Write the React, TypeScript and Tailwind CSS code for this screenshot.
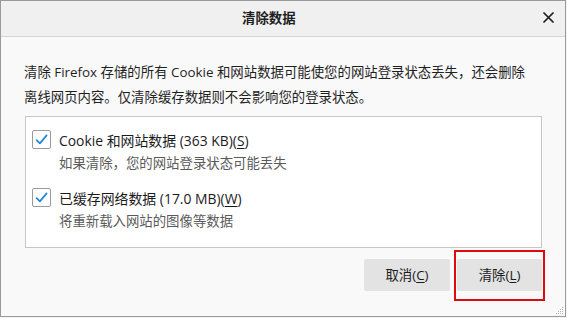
import React from "react";

const FONT = '"Open Sans", "Noto Sans CJK SC", sans-serif';

function Check() {
  return (
    <div className="w-[19px] h-[19px] shrink-0 border border-[#9a9a9a] rounded-[2px] bg-white flex items-center justify-center">
      <svg width="15" height="15" viewBox="0 0 15 15">
        <path d="M2.6 8.1 L5.9 11.4 L12.6 3.4" fill="none" stroke="#1f87d6" strokeWidth="1.7" strokeLinecap="round" strokeLinejoin="round" />
      </svg>
    </div>
  );
}

function Item({ label, accel, sub, className }: { label: string; accel: string; sub: string; className?: string }) {
  return (
    <div className={"flex items-start gap-[8px] " + (className ?? "")}>
      <Check />
      <div className="mt-[1px] flex flex-col">
        <div className="leading-[20px] text-[13.9px] text-[#1b1b1b] whitespace-nowrap">
          {label}(<span className="underline underline-offset-2">{accel}</span>)
        </div>
        <div className="mt-[2px] leading-[20px] text-[#5a5a5a] whitespace-nowrap">{sub}</div>
      </div>
    </div>
  );
}

export default function App() {
  return (
    <div className="w-[567px] h-[318px] bg-[#f4f4f4] overflow-hidden" style={{ fontFamily: FONT }}>
      <div className="relative w-[566px] h-[317px] border border-[#9a9a9a] bg-[#f9f9f9] flex flex-col text-[13.4px]">
        <div className="h-[36px] shrink-0 bg-[#f0f0f0] border-b border-[#d4d4d4] flex items-center">
          <div className="pl-[241px] font-bold text-[#1e1e1e] leading-[20px] -mt-[2px]">清除数据</div>
          <div className="ml-auto mr-[11px] -mt-[2px] w-[12px] h-[12px] flex items-center justify-center">
            <svg width="11" height="11" viewBox="0 0 11 11">
              <path d="M1 1 L10 10 M10 1 L1 10" stroke="#1c1c1c" strokeWidth="1.7" strokeLinecap="round" />
            </svg>
          </div>
        </div>
        <div className="pl-[23px] pt-[23px] pr-[20px] leading-[25px] text-[#1f1f1f]">
          <div className="whitespace-nowrap">清除 Firefox 存储的所有 Cookie 和网站数据可能使您的网站登录状态丢失，还会删除</div>
          <div className="whitespace-nowrap">离线网页内容。仅清除缓存数据则不会影响您的登录状态。</div>
        </div>
        <div className="ml-[24px] mt-[6px] w-[517px] border border-[#c6c6c6] bg-white pt-[13px] pb-[16px] pl-[6px]">
          <Item label="Cookie 和网站数据 (363 KB)" accel="S" sub="如果清除，您的网站登录状态可能丢失" />
          <Item className="mt-[15px]" label="已缓存网络数据 (17.0 MB)" accel="W" sub="将重新载入网站的图像等数据" />
        </div>
        <div className="mt-[11px] flex justify-end gap-[7px] w-[541px]">
          <button className="w-[86px] h-[32px] bg-[#e3e3e3] rounded-[2px] text-[#1b1b1b] leading-[20px]">
            取消(<span className="underline underline-offset-2">C</span>)
          </button>
          <div className="relative">
            <button className="w-[85px] h-[32px] bg-[#e3e3e3] rounded-[2px] text-[#1b1b1b] leading-[20px]">
              清除(<span className="underline underline-offset-2">L</span>)
            </button>
            <div className="absolute -left-[3px] -right-[3px] -top-[9px] -bottom-[10px] border-2 border-[#dd0b0b] pointer-events-none" />
          </div>
        </div>
        <svg className="absolute right-[1px] bottom-[1px]" width="9" height="9" viewBox="0 0 9 9">
          <rect x="7" y="1" width="1" height="1" fill="#b5b5b5" />
          <rect x="5" y="3" width="1" height="1" fill="#b5b5b5" />
          <rect x="7" y="3" width="1" height="1" fill="#b5b5b5" />
          <rect x="3" y="5" width="1" height="1" fill="#b5b5b5" />
          <rect x="5" y="5" width="1" height="1" fill="#b5b5b5" />
          <rect x="7" y="5" width="1" height="1" fill="#b5b5b5" />
          <rect x="1" y="7" width="1" height="1" fill="#b5b5b5" />
          <rect x="3" y="7" width="1" height="1" fill="#b5b5b5" />
          <rect x="5" y="7" width="1" height="1" fill="#b5b5b5" />
          <rect x="7" y="7" width="1" height="1" fill="#b5b5b5" />
        </svg>
      </div>
    </div>
  );
}
